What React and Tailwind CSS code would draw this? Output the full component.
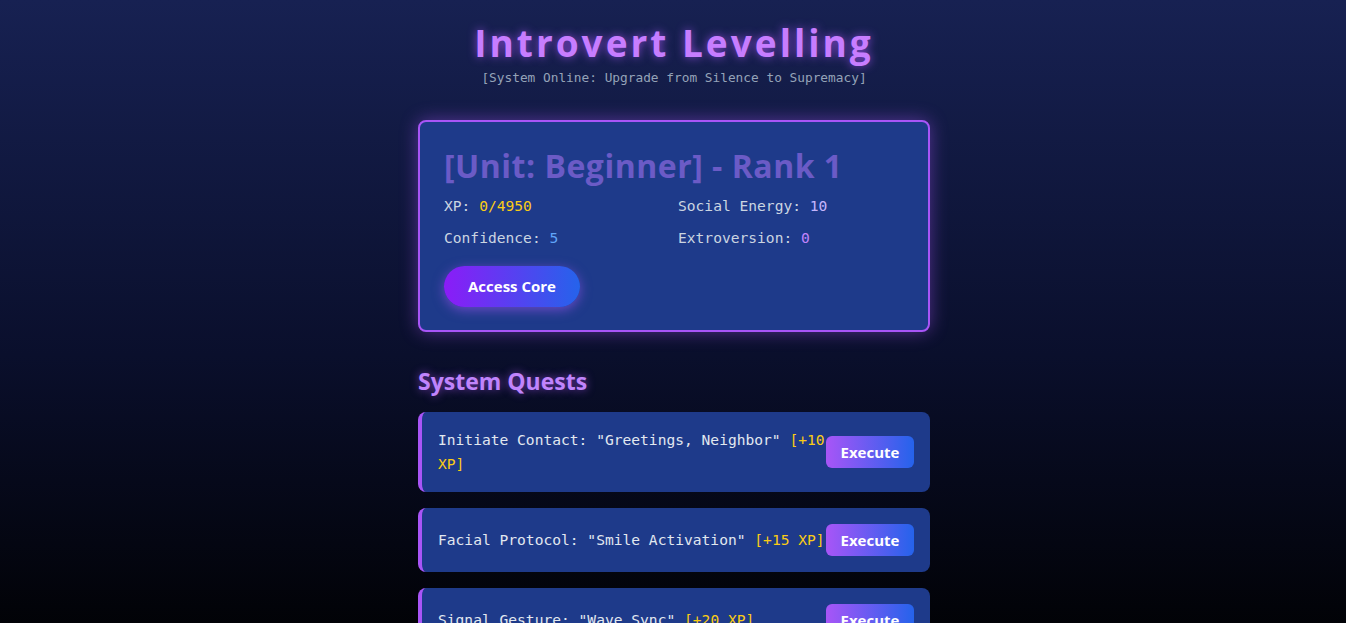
import React from "react";

const quests = [
  { text: 'Initiate Contact: "Greetings, Neighbor"', xp: 10 },
  { text: 'Facial Protocol: "Smile Activation"', xp: 15 },
  { text: 'Signal Gesture: "Wave Sync"', xp: 20 },
  { text: 'Verbal Output: "Compliment Stranger"', xp: 25 },
];

const mono = "font-['DejaVu_Sans_Mono',monospace]";
const sans = "font-['Open_Sans',sans-serif]";

const Stat = ({ label, value, color }) => (
  <div className={`${mono} text-[14.6px] leading-6 text-[#cbd5e1]`}>
    {label}: <span className={color}>{value}</span>
  </div>
);

const App = () => {
  return (
    <div className="min-h-screen bg-[linear-gradient(to_bottom,#172152_0%,#0a0f2c_45%,#000000_85%)] pt-[21px] pb-10">
      <div className="w-[512px] mx-auto translate-x-px">
        <h1
          className={`${sans} text-center text-[37px] leading-[44px] font-bold tracking-[3px] text-[#c77dff] [text-shadow:0_0_10px_rgba(168,85,247,0.8)]`}
        >
          Introvert Levelling
        </h1>
        <p className={`${mono} text-center text-[12.8px] leading-5 text-[#94a3b8] mt-[3px]`}>
          [System Online: Upgrade from Silence to Supremacy]
        </p>

        <div className="mt-[32px] bg-[#1e3a8a] border-2 border-[#a855f7] rounded-lg px-6 pt-[24px] pb-[23px] shadow-[0_0_18px_rgba(168,85,247,0.45)]">
          <h2 className={`${sans} text-[32px] leading-[40px] font-bold tracking-[0.5px] text-[#6b5bc6]`}>
            [Unit: Beginner] - Rank 1
          </h2>
          <div className="grid grid-cols-2 gap-x-2 gap-y-2 mt-[8px]">
            <Stat label="XP" value="0/4950" color="text-[#facc15]" />
            <Stat label="Social Energy" value="10" color="text-[#c4b5fd]" />
            <Stat label="Confidence" value="5" color="text-[#60a5fa]" />
            <Stat label="Extroversion" value="0" color="text-[#c084fc]" />
          </div>
          <button
            className={`${sans} mt-4 h-[41px] w-[136px] rounded-full bg-[linear-gradient(to_right,#8b1cf7,#2563eb)] text-white text-[15px] font-bold shadow-[0_3px_12px_rgba(168,85,247,0.55)]`}
          >
            Access Core
          </button>
        </div>

        <h3
          className={`${sans} mt-[33px] text-[23px] leading-8 font-bold text-[#c084fc] [text-shadow:0_0_8px_rgba(168,85,247,0.7)]`}
        >
          System Quests
        </h3>

        <div className="mt-[15px] flex flex-col gap-4">
          {quests.map((q) => (
            <div
              key={q.text}
              className="flex items-center bg-[#1e3a8a] border-l-4 border-[#a855f7] rounded-lg p-4"
            >
              <span className={`${mono} flex-1 min-w-0 text-[14.6px] leading-6 text-[#e2e8f0]`}>
                {q.text} <span className="text-[#facc15]">[+{q.xp} XP]</span>
              </span>
              <button
                className={`${sans} shrink-0 w-[88px] h-8 rounded-md bg-[linear-gradient(to_right,#a855f7,#2563eb)] text-white text-[15px] font-bold`}
              >
                Execute
              </button>
            </div>
          ))}
        </div>
      </div>
    </div>
  );
};

export default App;
